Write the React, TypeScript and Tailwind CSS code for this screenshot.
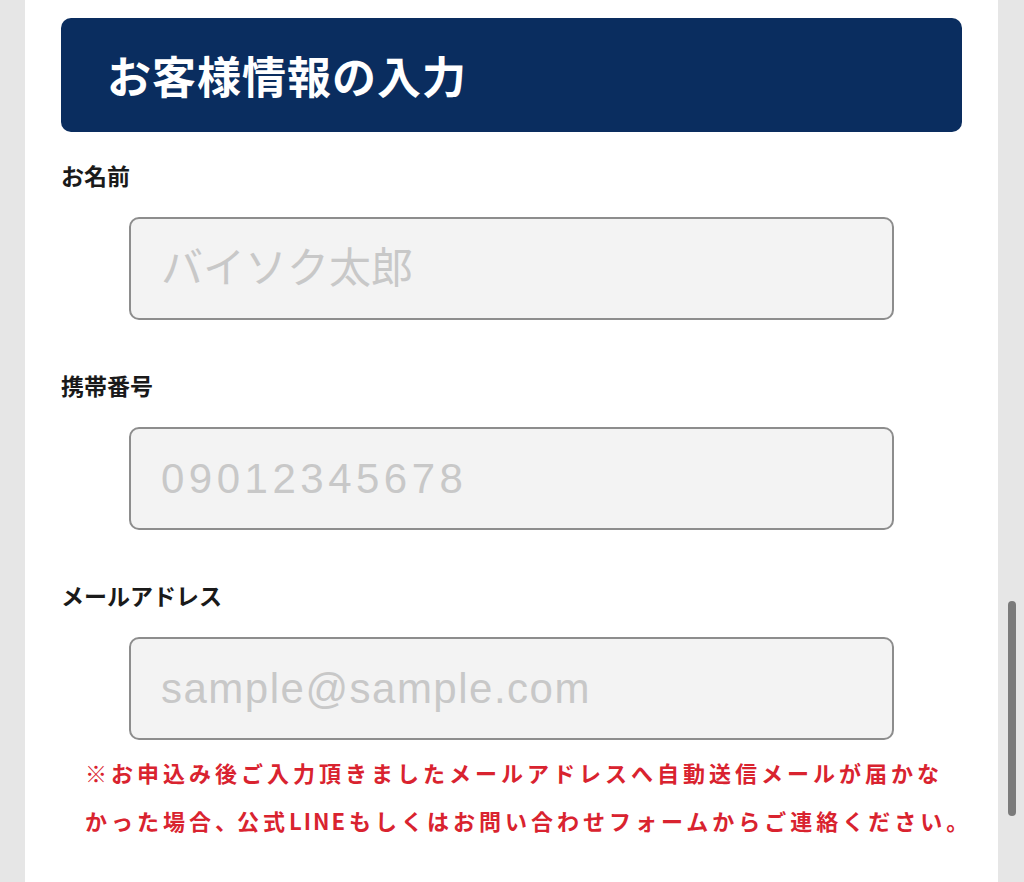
import React from "react";

const fields = [
  { label: "お名前", placeholder: "バイソク太郎", type: "text", track: "tracking-[0px]" },
  { label: "携帯番号", placeholder: "09012345678", type: "tel", track: "tracking-[4.5px]" },
  { label: "メールアドレス", placeholder: "sample@sample.com", type: "email", track: "tracking-[1.5px]" },
];

export default function App() {
  return (
    <div className="relative h-[882px] w-full overflow-hidden bg-[#e6e6e6] font-['Noto_Sans_CJK_JP',sans-serif]">
      <div className="ml-[25px] h-full w-[973px] bg-white px-[36px] pt-[18px]">
        <div className="flex h-[114px] items-center rounded-[10px] bg-[#0a2d5f] pl-[46px]">
          <h1 className="text-[44px] font-bold leading-none tracking-[1px] text-white">
            お客様情報の入力
          </h1>
        </div>

        {fields.map((f, i) => (
          <div key={f.label} className={i === 0 ? "mt-[32px]" : "mt-[54px]"}>
            <div className="text-[23px] font-bold leading-[23px] text-[#1a1a1a]">{f.label}</div>
            <div className="mt-[30px] pl-[68px]">
              <input
                type={f.type}
                placeholder={f.placeholder}
                className={`box-border block h-[103px] w-[765px] rounded-[10px] border-2 border-[#8d8d8d] bg-[#f3f3f3] pl-[30px] font-['Liberation_Sans','Noto_Sans_CJK_JP',sans-serif] text-[42px] leading-none text-[#333] outline-none placeholder:text-[#c8c8c8] ${f.track}`}
              />
            </div>
          </div>
        ))}

        <p className="mt-[8px] whitespace-nowrap pl-[24px] text-[22px] font-bold leading-[48px] tracking-[4px] text-[#d9232f]">
          ※お申込み後ご入力頂きましたメールアドレスへ自動送信メールが届かな
          <br />
          かった場合<span className="tracking-[-7px]">、</span>
          <span className="ml-[7px]">公式</span>
          <span className="tracking-[2px]">LINE</span>
          <span className="ml-[2px]">もしくはお問い合わせフォームからご連絡ください。</span>
        </p>
      </div>

      <div className="absolute left-[1008px] top-[601px] h-[215px] w-[8px] rounded-full bg-[#7b7b7b]" />
    </div>
  );
}
